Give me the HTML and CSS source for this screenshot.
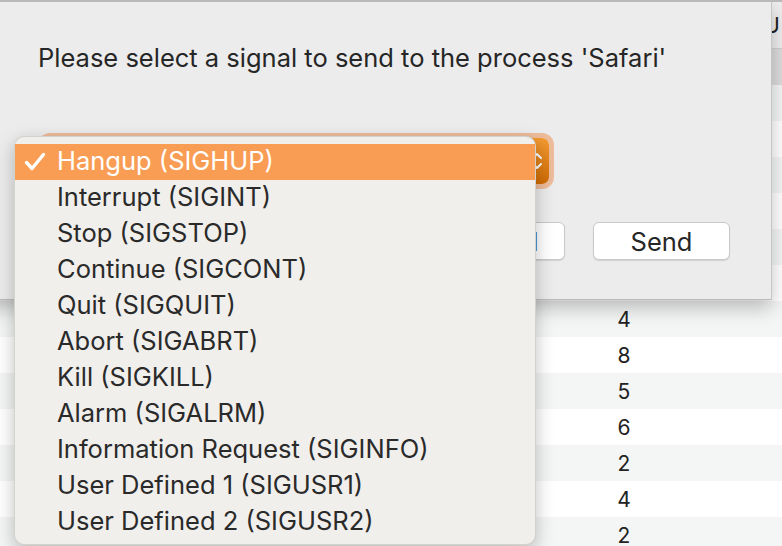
FILE: index.html
```html
<!DOCTYPE html>
<html>
<head>
<meta charset="utf-8">
<link rel="stylesheet" href="styles.css">
</head>
<body>
<div class="page">
  <div class="table">
    <div class="thead"><span class="hcell">CPU</span></div>
    <div class="row sel"><span class="num"></span></div>
    <div class="row odd"><span class="num"></span></div>
    <div class="row"><span class="num"></span></div>
    <div class="row odd"><span class="num"></span></div>
    <div class="row"><span class="num"></span></div>
    <div class="row odd"><span class="num"></span></div>
    <div class="row"><span class="num"></span></div>
    <div class="row odd"><span class="num">4</span></div>
    <div class="row"><span class="num">8</span></div>
    <div class="row odd"><span class="num">5</span></div>
    <div class="row"><span class="num">6</span></div>
    <div class="row odd"><span class="num">2</span></div>
    <div class="row"><span class="num">4</span></div>
    <div class="row odd"><span class="num">2</span></div>
  </div>

  <div class="dialog">
    <p class="prompt">Please select a signal to send to the process 'Safari'</p>
    <div class="popup">
      <span class="popup-body"></span>
      <span class="popup-arrows">
        <svg width="12" height="22" viewBox="0 0 12 22"><path d="M2 8 L6 4 L10 8 M2 14 L6 18 L10 14" fill="none" stroke="#fff" stroke-width="2" stroke-linecap="round" stroke-linejoin="round"/></svg>
      </span>
    </div>
    <div class="buttons">
      <button class="btn">Cancel</button>
      <button class="btn">Send</button>
    </div>
  </div>

  <div class="menu">
    <div class="item selected">
      <span class="check"><svg width="22" height="20" viewBox="0 0 22 20"><path d="M2.5 10.5 L8 16.5 L19.5 2.5" fill="none" stroke="#fff" stroke-width="3.4" stroke-linecap="round" stroke-linejoin="round"/></svg></span>
      <span class="label">Hangup (SIGHUP)</span>
    </div>
    <div class="item"><span class="check"></span><span class="label">Interrupt (SIGINT)</span></div>
    <div class="item"><span class="check"></span><span class="label">Stop (SIGSTOP)</span></div>
    <div class="item"><span class="check"></span><span class="label">Continue (SIGCONT)</span></div>
    <div class="item"><span class="check"></span><span class="label">Quit (SIGQUIT)</span></div>
    <div class="item"><span class="check"></span><span class="label">Abort (SIGABRT)</span></div>
    <div class="item"><span class="check"></span><span class="label">Kill (SIGKILL)</span></div>
    <div class="item"><span class="check"></span><span class="label">Alarm (SIGALRM)</span></div>
    <div class="item"><span class="check"></span><span class="label">Information Request (SIGINFO)</span></div>
    <div class="item"><span class="check"></span><span class="label">User Defined 1 (SIGUSR1)</span></div>
    <div class="item"><span class="check"></span><span class="label">User Defined 2 (SIGUSR2)</span></div>
  </div>
</div>
</body>
</html>
```
FILE: styles.css
```css
* { box-sizing: border-box; }
html, body {
  margin: 0;
  padding: 0;
  width: 782px;
  height: 546px;
  overflow: hidden;
  background: #ffffff;
}
body {
  font-family: "Inter", "Liberation Sans", sans-serif;
  color: #262626;
}
.page {
  position: relative;
  width: 782px;
  height: 546px;
  overflow: hidden;
  border-top: 2px solid #b9b9b9;
}

/* background table */
.table {
  display: flex;
  flex-direction: column;
}
.thead {
  height: 47px;
  background: #ededed;
  border-bottom: 1px solid #cfcfcf;
  display: flex;
  justify-content: flex-end;
  align-items: center;
  padding-right: 2px;
  font-size: 22px;
  color: #1e1e1e;
}
.row {
  height: 36px;
  background: #ffffff;
  display: grid;
  grid-template-columns: 604px 40px 1fr;
  align-items: center;
  font-size: 21px;
  color: #222;
}
.row.odd { background: #f4f5f5; }
.row.sel { background: #dcdcdc; }
.num {
  grid-column: 2;
  text-align: center;
}

/* dialog sheet */
.dialog {
  position: absolute;
  left: -20px;
  top: 0;
  width: 792px;
  height: 298px;
  background: #ececec;
  border-right: 1px solid #c6c6c6;
  border-bottom: 1px solid #bcbcbc;
  box-shadow: 0 8px 18px rgba(0, 0, 0, 0.24);
  padding: 41px 41px 0 58px;
  display: flex;
  flex-direction: column;
}
.prompt {
  margin: 0;
  font-size: 25.5px;
  line-height: 30px;
  color: #262626;
}
.popup {
  margin-top: 65px;
  margin-left: 5px;
  width: 506px;
  height: 46px;
  border-radius: 7px;
  background: #ffffff;
  box-shadow: 0 0 0 5px rgba(238, 150, 90, 0.55);
  display: flex;
  align-items: center;
  overflow: hidden;
}
.popup-body {
  flex: 1;
}
.popup-arrows {
  width: 24px;
  height: 100%;
  background: linear-gradient(#f49a32, #d06c04);
  display: flex;
  align-items: center;
  justify-content: center;
}
.buttons {
  margin-top: 38px;
  display: flex;
  justify-content: flex-end;
  gap: 28px;
}
.btn {
  width: 137px;
  height: 38px;
  background: #ffffff;
  border: 1px solid #c9c9c9;
  border-radius: 6px;
  box-shadow: 0 1px 1px rgba(0, 0, 0, 0.12);
  font-family: "Inter", "Liberation Sans", sans-serif;
  font-size: 25.5px;
  color: #262626;
  padding: 0;
}

/* popup menu */
.menu {
  position: absolute;
  left: 14px;
  top: 134px;
  width: 522px;
  height: 409px;
  background: #f0efec;
  border-radius: 10px;
  border: 1px solid rgba(0, 0, 0, 0.12);
  box-shadow: 0 6px 18px rgba(0, 0, 0, 0.25);
  padding-top: 7px;
  display: flex;
  flex-direction: column;
}
.item {
  height: 36px;
  display: grid;
  grid-template-columns: 42px 1fr;
  align-items: center;
  font-size: 25.5px;
  line-height: 30px;
  color: #2a2a2a;
  padding-bottom: 3px;
}
.item.selected {
  background: #f99d55;
  color: #ffffff;
}
.check {
  display: flex;
  padding-left: 9px;
  padding-top: 3px;
}
```
